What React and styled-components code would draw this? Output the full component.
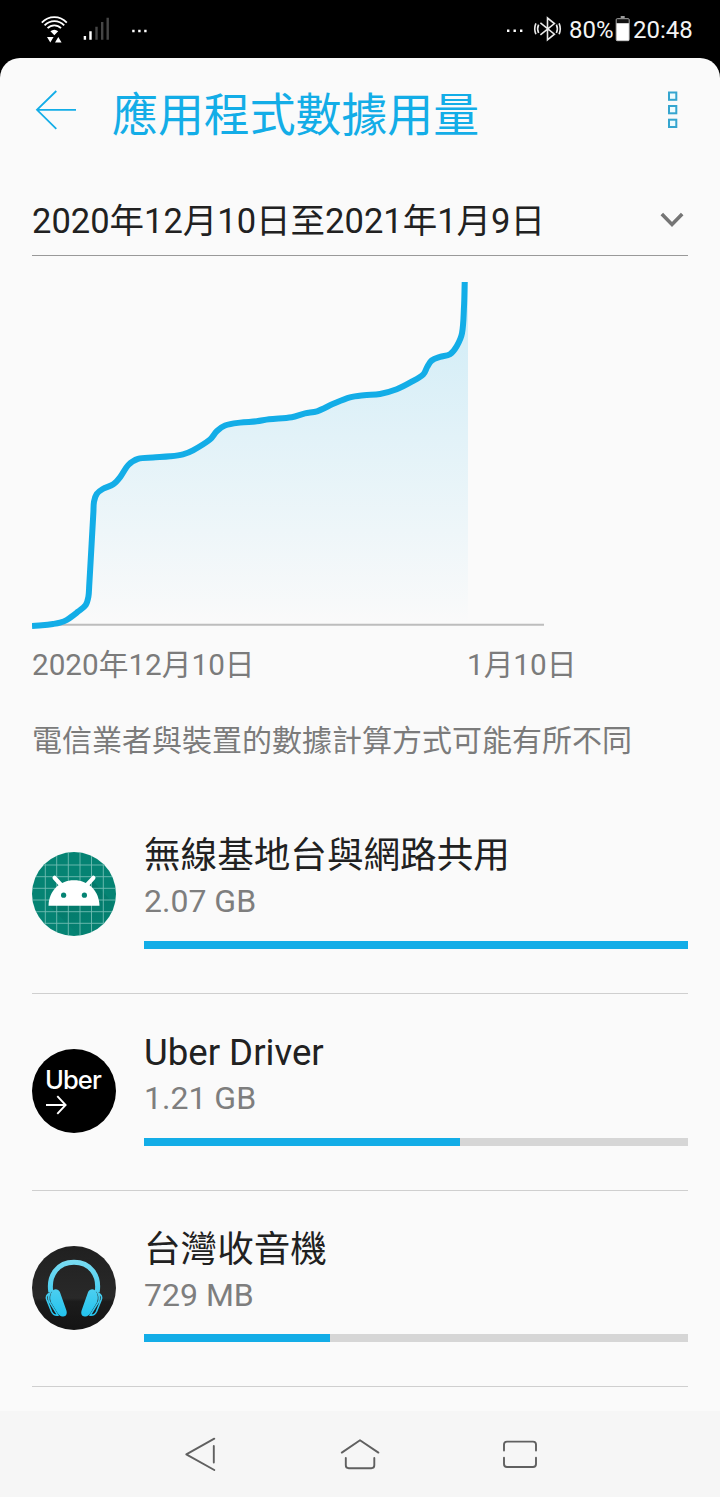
import React from "react";
import styled, { createGlobalStyle } from "styled-components";

const BLUE = "#13ade7";

const GlobalStyle = createGlobalStyle`
  * { box-sizing: border-box; }
  body {
    margin: 0;
    background: #000;
    font-family: Roboto, "Noto Sans CJK TC", sans-serif;
    font-weight: 400;
  }
  svg { display: block; flex: none; }
`;

const Screen = styled.div`
  width: 720px;
  height: 1497px;
  display: flex;
  flex-direction: column;
  overflow: hidden;
  background: #000;
`;

const StatusBar = styled.header`
  height: 58px;
  flex: none;
  display: flex;
  justify-content: space-between;
  color: #f4f4f4;
`;

const StatusGroup = styled.div`
  display: flex;
  align-items: flex-start;
`;

const StatusText = styled.span`
  width: ${(p) => p.$width}px;
  font-size: 24px;
  line-height: 60px;
  white-space: nowrap;
`;

const Card = styled.main`
  flex: 1;
  min-height: 0;
  padding: 0 32px;
  overflow: hidden;
  background: #fafafa;
  border-radius: 20px 20px 0 0;
`;

const TitleBar = styled.div`
  height: 116px;
  display: flex;
  align-items: flex-start;
`;

const Title = styled.h1`
  flex: 1;
  margin: 0 0 0 35px;
  font-size: 45.9px;
  font-weight: 400;
  line-height: 114px;
  color: ${BLUE};
`;

const IconButton = styled.button`
  height: 104px;
  display: flex;
  align-items: center;
  padding: 0;
  border: 0;
  background: none;
`;

const CycleSelect = styled.div`
  height: 82px;
  padding-top: 27px;
  display: flex;
  justify-content: space-between;
  align-items: flex-start;
  border-bottom: 1px solid #999;
  color: #212121;
  font-size: 34.5px;
  line-height: 41px;
`;

const ChartLabels = styled.div`
  display: flex;
  margin-top: 14px;
  font-size: 29.7px;
  line-height: 41px;
  color: #7b7b7b;
`;

const ChartLabel = styled.span`
  width: ${(p) => p.$width}px;
  white-space: nowrap;
`;

const Note = styled.p`
  margin: 35px 0 0;
  font-size: 30px;
  line-height: 41px;
  color: #7b7b7b;
`;

const AppList = styled.ul`
  margin: 36.4px 0 0;
  padding: 0;
  list-style: none;
`;

const AppItem = styled.li`
  height: 196.67px;
  padding-top: 38px;
  display: flex;
  gap: 28px;
  border-bottom: 1px solid #cfcfcf;
`;

const AppIcon = styled.div`
  width: 84px;
  height: 84px;
  margin-top: 17px;
  flex: none;
`;

const AppInfo = styled.div`
  flex: 1;
  display: flex;
  flex-direction: column;
`;

const AppName = styled.div`
  font-size: 36.6px;
  line-height: 42px;
  color: #212121;
`;

const AppUsage = styled.div`
  margin-top: 3px;
  font-size: 32px;
  line-height: 42px;
  color: #7e7e7e;
`;

const Track = styled.div`
  height: 8px;
  margin-top: 18.5px;
  background: #d6d6d6;
`;

const Fill = styled.div`
  height: 8px;
  background: ${BLUE};
`;

const NavBar = styled.nav`
  height: 86px;
  flex: none;
  display: flex;
  justify-content: center;
  background: #f6f6f6;
`;

const NavButton = styled.button`
  width: 160px;
  padding: 0;
  border: 0;
  background: none;
`;

const usagePoints = [
  [32, 626], [42, 625.3], [53, 624], [60, 622.7], [66.7, 620], [78, 611.7], [85.7, 605], [88.4, 596.7],
  [89.2, 586], [93.4, 512], [94, 501.7], [96.7, 494], [102.7, 489], [113.3, 484.3], [120, 477.3],
  [128.3, 465], [138, 458.8], [153, 457.5], [170, 456.3], [183, 454.3], [193, 450.3],
  [210, 439.5], [217, 431], [225, 425.5], [240, 422.6], [256.7, 421.3], [269, 419.3],
  [291.7, 417.3], [305, 413.4], [317, 411.3], [333.3, 403.8], [350, 397.3], [364, 395.2],
  [380, 394], [396.7, 389.3], [411.7, 381.7], [423.3, 374.3], [427.3, 366.7],
  [431.7, 360.5], [440, 356.9], [450, 354.2], [456.7, 346.3], [462, 333.3], [464, 306.7], [464.7, 282],
];

function smoothPath(points) {
  let d = `M${points[0].join(" ")}`;
  for (let i = 0; i < points.length - 1; i++) {
    const a = points[i - 1] || points[i];
    const b = points[i];
    const c = points[i + 1];
    const e = points[i + 2] || c;
    const k = Math.hypot(c[0] - b[0], c[1] - b[1]) / 3;
    const t1 = Math.hypot(c[0] - a[0], c[1] - a[1]);
    const t2 = Math.hypot(e[0] - b[0], e[1] - b[1]);
    d += `C${b[0] + ((c[0] - a[0]) / t1) * k} ${b[1] + ((c[1] - a[1]) / t1) * k} ${c[0] - ((e[0] - b[0]) / t2) * k} ${c[1] - ((e[1] - b[1]) / t2) * k} ${c[0]} ${c[1]}`;
  }
  return d;
}

function UsageChart() {
  const line = smoothPath(usagePoints);
  return (
    <svg width="512" height="374" viewBox="32 256 512 374">
      <defs>
        <linearGradient id="usage-area" gradientUnits="userSpaceOnUse" x1="0" y1="282" x2="0" y2="625">
          <stop offset="0" stopColor={BLUE} stopOpacity="0.19" />
          <stop offset="1" stopColor={BLUE} stopOpacity="0" />
        </linearGradient>
      </defs>
      <path d={`${line}H468V625H32Z`} fill="url(#usage-area)" />
      <path d="M32 624.8H544" stroke="#bdbdbd" strokeWidth="2" />
      <path d={line} fill="none" stroke={BLUE} strokeWidth="6" />
    </svg>
  );
}

function LeftStatusIcons() {
  return (
    <svg width="160" height="58" viewBox="0 0 160 58">
      <g fill="none" stroke="#fff" strokeWidth="1.8">
        <path d="M41.8 22.6C48.8 15.4 59.8 15.4 66.8 22.6" />
        <path d="M44.6 25.4C50 19.7 58.8 19.7 64.2 25.4" />
        <path d="M47.6 28.2C51.3 24.4 57.3 24.4 61 28.2" />
      </g>
      <path d="M50.4 31.2Q54.3 28.2 58.2 31.2L54.3 35.2ZM47 37h6.6l-3.3 5.5ZM55 42.6h6.6l-3.3-5.5Z" fill="#fff" />
      <path d="M83.7 36h2.4v3.8h-2.4ZM89.3 31.3h2.4v8.5h-2.4Z" fill="#fff" />
      <path d="M95.3 26.7h2.4v13.1h-2.4ZM101 22h2.4v17.8H101ZM106.5 17.7h2.4v22.1h-2.4Z" fill="#454545" />
      <path d="M132.2 29.8h2.4v2.4h-2.4ZM138.2 29.8h2.4v2.4h-2.4ZM144.2 29.8h2.4v2.4h-2.4Z" fill="#fff" />
    </svg>
  );
}

function BluetoothStatus() {
  return (
    <svg width="69" height="58" viewBox="500 0 69 58">
      <path d="M507 29.5h2.4v2.4h-2.4ZM513.5 29.5h2.4v2.4h-2.4ZM520 29.5h2.4v2.4h-2.4Z" fill="#fff" />
      <g fill="none" stroke="#e8e8e8" strokeWidth="1.6">
        <path d="M540.4 22.8L554.4 34.2L547.5 39.8V18L554.4 23.5L540.4 34.9" />
        <path d="M538.6 24.6Q536.7 28.8 538.6 33M535.9 23.4Q533.6 28.8 535.9 34.2" />
        <path d="M556.4 24.6Q558.3 28.8 556.4 33M559.1 23.4Q561.4 28.8 559.1 34.2" />
      </g>
    </svg>
  );
}

function BatteryIcon() {
  return (
    <svg width="19" height="58" viewBox="614 0 19 58">
      <path d="M620.7 16.3h4v1.4h-4Z" fill="#ddd" />
      <rect x="616.2" y="18.7" width="13" height="22" rx="1" fill="#111" stroke="#aaa" />
      <path d="M616.5 23.2h12.4v17.3h-12.4Z" fill="#fff" />
    </svg>
  );
}

function BackArrow() {
  return (
    <svg width="45" height="44" viewBox="32 88 45 44" fill="none" stroke={BLUE} strokeWidth="1.8">
      <path d="M56.3 91L37 109.8L56.3 128.8M37 109.8H76" />
    </svg>
  );
}

function MoreIcon() {
  return (
    <svg width="22" height="40" viewBox="666 90 22 40" fill="#eefcff" stroke="#35a5cf" strokeWidth="2">
      <rect x="669" y="92.5" width="7.3" height="7.3" />
      <rect x="669" y="106" width="7.3" height="7.3" />
      <rect x="669" y="119.7" width="7.3" height="7.3" />
    </svg>
  );
}

function Chevron() {
  return (
    <svg width="30" height="41" viewBox="658 201 30 41" fill="none" stroke="#757575" strokeWidth="3.6">
      <path d="M661.8 214L672 224.4L682.2 214" />
    </svg>
  );
}

function AndroidIcon() {
  return (
    <svg width="84" height="84" viewBox="0 0 84 84">
      <defs>
        <clipPath id="android-disc"><circle cx="42" cy="42" r="42" /></clipPath>
        <linearGradient id="android-shade" x1="0.2" y1="0" x2="0.7" y2="1">
          <stop offset="0" stopColor="#00695c" stopOpacity="0.55" />
          <stop offset="1" stopColor="#00695c" stopOpacity="0" />
        </linearGradient>
      </defs>
      <g clipPath="url(#android-disc)">
        <path d="M0 0H84V84H0Z" fill="#058373" />
        <path d="M17 53.5L47 84H84V54L60 28Z" fill="url(#android-shade)" />
        <path d="M13.3 0V84M24.7 0V84M36.3 0V84M48 0V84M59.5 0V84M71.3 0V84M0 13H84M0 24.7H84M0 36.3H84M0 48H84M0 59.7H84M0 71.3H84" stroke="#72bcb2" strokeWidth="0.9" />
      </g>
      <path d="M22.6 25.8L31 35M61.4 25.8L53 35" stroke="#fff" strokeWidth="4.2" strokeLinecap="round" />
      <path d="M16.5 53.8C16.8 38.8 27.5 28.2 42 28.2S67.2 38.8 67.5 53.8Z" fill="#fff" />
      <circle cx="31.6" cy="43.2" r="2.6" fill="#058373" />
      <circle cx="52.4" cy="43.2" r="2.6" fill="#058373" />
    </svg>
  );
}

const UberDisc = styled.div`
  width: 84px;
  height: 84px;
  padding: 16.5px 0 0 13px;
  border-radius: 50%;
  background: #000;
  color: #fff;
  font-family: Inter, sans-serif;
  font-size: 25.5px;
  font-weight: 500;
  line-height: 28px;
  letter-spacing: -0.9px;
`;

function UberIcon() {
  return (
    <UberDisc>
      Uber
      <svg width="24" height="22" viewBox="0 0 24 22" fill="none" stroke="#fff" strokeWidth="1.9">
        <path d="M1 11H20.3M12.3 2.2L20.6 11L12.3 19.8" />
      </svg>
    </UberDisc>
  );
}

function HeadphonesIcon() {
  return (
    <svg width="84" height="84" viewBox="0 0 84 84">
      <defs>
        <linearGradient id="phones-blue" gradientUnits="userSpaceOnUse" x1="0" y1="14" x2="0" y2="70">
          <stop offset="0" stopColor="#7adcf2" />
          <stop offset="1" stopColor="#23c3ee" />
        </linearGradient>
        <linearGradient id="phones-disc" x1="0" y1="0" x2="0" y2="1">
          <stop offset="0" stopColor="#202020" />
          <stop offset="0.62" stopColor="#292929" />
          <stop offset="0.66" stopColor="#1c1c1c" />
          <stop offset="1" stopColor="#141414" />
        </linearGradient>
      </defs>
      <circle cx="42" cy="42" r="42" fill="url(#phones-disc)" />
      <path d="M18.8 46C16.2 29 26 16.3 42 16.3S67.8 29 65.2 46" fill="none" stroke="url(#phones-blue)" strokeWidth="5" />
      <g fill="url(#phones-blue)">
        <path d="M20 45.5C22 42.5 26 42.6 27.9 46L34.4 64.5C35.5 68 34 70.6 31 70.4C28.8 70.6 27 69.5 25.5 67L18.8 56C17.6 52 18 48.5 20 45.5Z" />
        <path d="M64 45.5C62 42.5 58 42.6 56.1 46L49.6 64.5C48.5 68 50 70.6 53 70.4C55.2 70.6 57 69.5 58.5 67L65.2 56C66.4 52 66 48.5 64 45.5Z" />
      </g>
      <g fill="none" stroke="url(#phones-blue)" strokeWidth="1.6">
        <path d="M18 47C14.5 48.5 13.8 51 14.9 54L19.5 65.5C20.8 68.4 22.6 69.5 25.7 69.2L17.5 56Q15.8 51 18 47Z" />
        <path d="M66 47C69.5 48.5 70.2 51 69.1 54L64.5 65.5C63.2 68.4 61.4 69.5 58.3 69.2L66.5 56Q68.2 51 66 47Z" />
      </g>
    </svg>
  );
}

const apps = [
  { name: "無線基地台與網路共用", usage: "2.07 GB", percent: 100, Icon: AndroidIcon },
  { name: "Uber Driver", usage: "1.21 GB", percent: 58.1, Icon: UberIcon },
  { name: "台灣收音機", usage: "729 MB", percent: 34.1, Icon: HeadphonesIcon },
];

const navIcons = [
  "M214.3 1438.7L186.3 1454.3L214.3 1470M213.8 1446V1462.5",
  "M341.8 1452.6L360 1440.3L378.4 1452.6M345.8 1458V1465.3Q345.8 1468.2 348.8 1468.2H371.3Q374.3 1468.2 374.3 1465.3V1458",
  "M504 1450.5V1444.6Q504 1441.6 507 1441.6H533Q536 1441.6 536 1444.6V1450.5M504 1457.7V1464Q504 1467 507 1467H533Q536 1467 536 1464V1457.7",
];

export default function App() {
  return (
    <>
      <GlobalStyle />
      <Screen>
        <StatusBar>
          <StatusGroup><LeftStatusIcons /></StatusGroup>
          <StatusGroup>
            <BluetoothStatus />
            <StatusText $width={45}>80%</StatusText>
            <BatteryIcon />
            <StatusText $width={87}>20:48</StatusText>
          </StatusGroup>
        </StatusBar>
        <Card>
          <TitleBar>
            <IconButton aria-label="返回"><BackArrow /></IconButton>
            <Title>應用程式數據用量</Title>
            <IconButton aria-label="更多"><MoreIcon /></IconButton>
          </TitleBar>
          <CycleSelect>
            <span>2020年12月10日至2021年1月9日</span>
            <Chevron />
          </CycleSelect>
          <UsageChart />
          <ChartLabels>
            <ChartLabel $width={435}>2020年12月10日</ChartLabel>
            <ChartLabel>1月10日</ChartLabel>
          </ChartLabels>
          <Note>電信業者與裝置的數據計算方式可能有所不同</Note>
          <AppList>
            {apps.map(({ name, usage, percent, Icon }) => (
              <AppItem key={name}>
                <AppIcon><Icon /></AppIcon>
                <AppInfo>
                  <AppName>{name}</AppName>
                  <AppUsage>{usage}</AppUsage>
                  <Track><Fill style={{ width: `${percent}%` }} /></Track>
                </AppInfo>
              </AppItem>
            ))}
          </AppList>
        </Card>
        <NavBar>
          {navIcons.map((d, i) => (
            <NavButton key={d}>
              <svg width="160" height="86" viewBox={`${120 + i * 160} 1411 160 86`} fill="none" stroke="#606060" strokeWidth="1.9" strokeLinecap="round" strokeLinejoin="round">
                <path d={d} />
              </svg>
            </NavButton>
          ))}
        </NavBar>
      </Screen>
    </>
  );
}
